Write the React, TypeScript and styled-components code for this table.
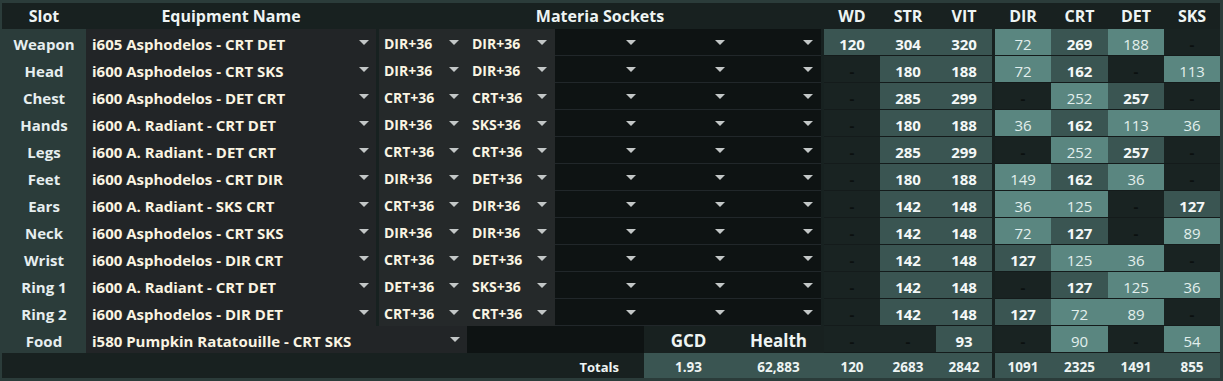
import React from "react";
import styled, { createGlobalStyle, css } from "styled-components";

const COLS =
  "84px 290px 3px 88px 88px 89px 89px 88px 3px 56px 56px 56px 3px 56px 57px 56px 56px";

const GlobalStyle = createGlobalStyle`
  html, body {
    margin: 0;
    background: #2b3c3a;
  }
  body {
    font-family: "Open Sans", "Noto Sans", sans-serif;
    font-size: 14px;
    -webkit-font-smoothing: antialiased;
  }
`;

const Sheet = styled.div`
  padding: 3px 3px 3px 2px;
  width: 1218px;
`;

const Row = styled.div<{ $h: number }>`
  display: grid;
  grid-template-columns: ${COLS};
  height: ${(p) => p.$h}px;
`;

const HeadRow = styled(Row)`
  background: #182120;
`;

const centered = css`
  display: flex;
  align-items: center;
  justify-content: center;
  padding-top: 2px;
`;

const HeadCell = styled.div<{ $col?: string }>`
  grid-column: ${(p) => p.$col ?? "auto"};
  ${centered};
  padding-top: 0;
  color: #eef4f3;
  font-weight: 700;
  font-size: 16px;
`;

const SlotCell = styled.div`
  ${centered};
  color: #e6eeef;
  font-weight: 700;
  font-size: 15px;
`;

type Tone = "equip" | "materia" | "empty";

const toneBg: Record<Tone, string> = {
  equip: "#222527",
  materia: "#25292a",
  empty: "#0e1313",
};

const Select = styled.div<{ $tone: Tone; $col?: string; $line?: boolean }>`
  grid-column: ${(p) => p.$col ?? "auto"};
  display: flex;
  align-items: center;
  padding: 2px ${(p) => (p.$tone === "equip" ? 7 : 8)}px 0
    ${(p) => (p.$tone === "equip" ? 6 : 5)}px;
  background: ${(p) => toneBg[p.$tone]};
  color: #faf4e2;
  font-weight: 700;
  font-size: ${(p) => (p.$tone === "equip" ? 15 : 14)}px;
  white-space: nowrap;
  overflow: hidden;
  ${(p) =>
    p.$line &&
    css`
      box-shadow: inset 0 -1px 0 #21272a;
    `}
`;

const Caret = styled.span`
  width: 0;
  height: 0;
  margin: -2px 0 0 auto;
  border-left: 5px solid transparent;
  border-right: 5px solid transparent;
  border-top: 5px solid #c3c7c7;
  flex: none;
`;

const Divider = styled.div<{ $bg?: string; $col?: string }>`
  grid-column: ${(p) => p.$col ?? "auto"};
  background: ${(p) => p.$bg ?? "#172120"};
`;

type Kind = "dark" | "mid" | "light";

const kindBg: Record<Kind, string> = {
  dark: "#192322",
  mid: "#3a5552",
  light: "#5a8680",
};

const StatCell = styled.div<{ $kind: Kind }>`
  ${centered};
  background: ${(p) => kindBg[p.$kind]};
  box-shadow: inset 0 -1px 0 #141b1b;
  font-weight: ${(p) => (p.$kind === "light" ? 400 : 700)};
  color: ${(p) =>
    p.$kind === "dark" ? "#0b1010" : p.$kind === "light" ? "#e2efed" : "#f4f8f7"};
  font-size: 15px;
`;

const FoodLabel = styled.div<{ $col?: string }>`
  grid-column: ${(p) => p.$col ?? "auto"};
  ${centered};
  background: #182120;
  color: #eef4f3;
  font-weight: 700;
  font-size: 17px;
`;

const TotalsRow = styled(Row)`
  background: #3a5552;
`;

const TotalsLabel = styled.div`
  grid-column: 1 / 7;
  ${centered};
  justify-content: flex-end;
  padding-right: 25px;
  background: #182120;
  color: #eef4f3;
  font-weight: 700;
  font-size: 13px;
`;

const TotalCell = styled.div<{ $col?: string }>`
  grid-column: ${(p) => p.$col ?? "auto"};
  ${centered};
  color: #eef4f3;
  font-weight: 700;
  font-size: 13.5px;
`;

type Stat = [string, Kind];

interface Gear {
  slot: string;
  name: string;
  m1: string;
  m2: string;
  stats: Stat[];
}

const D: Stat = ["-", "dark"];
const m = (v: string): Stat => [v, "mid"];
const l = (v: string): Stat => [v, "light"];

const gear: Gear[] = [
  { slot: "Weapon", name: "i605 Asphodelos - CRT DET", m1: "DIR+36", m2: "DIR+36", stats: [m("120"), m("304"), m("320"), l("72"), m("269"), l("188"), D] },
  { slot: "Head", name: "i600 Asphodelos - CRT SKS", m1: "DIR+36", m2: "DIR+36", stats: [D, m("180"), m("188"), l("72"), m("162"), D, l("113")] },
  { slot: "Chest", name: "i600 Asphodelos - DET CRT", m1: "CRT+36", m2: "CRT+36", stats: [D, m("285"), m("299"), D, l("252"), m("257"), D] },
  { slot: "Hands", name: "i600 A. Radiant - CRT DET", m1: "DIR+36", m2: "SKS+36", stats: [D, m("180"), m("188"), l("36"), m("162"), l("113"), l("36")] },
  { slot: "Legs", name: "i600 A. Radiant - DET CRT", m1: "CRT+36", m2: "CRT+36", stats: [D, m("285"), m("299"), D, l("252"), m("257"), D] },
  { slot: "Feet", name: "i600 Asphodelos - CRT DIR", m1: "DIR+36", m2: "DET+36", stats: [D, m("180"), m("188"), l("149"), m("162"), l("36"), D] },
  { slot: "Ears", name: "i600 A. Radiant - SKS CRT", m1: "CRT+36", m2: "DIR+36", stats: [D, m("142"), m("148"), l("36"), l("125"), D, m("127")] },
  { slot: "Neck", name: "i600 Asphodelos - CRT SKS", m1: "DIR+36", m2: "DIR+36", stats: [D, m("142"), m("148"), l("72"), m("127"), D, l("89")] },
  { slot: "Wrist", name: "i600 Asphodelos - DIR CRT", m1: "CRT+36", m2: "DET+36", stats: [D, m("142"), m("148"), m("127"), l("125"), l("36"), D] },
  { slot: "Ring 1", name: "i600 A. Radiant - CRT DET", m1: "DET+36", m2: "SKS+36", stats: [D, m("142"), m("148"), D, m("127"), l("125"), l("36")] },
  { slot: "Ring 2", name: "i600 Asphodelos - DIR DET", m1: "CRT+36", m2: "CRT+36", stats: [D, m("142"), m("148"), m("127"), l("72"), l("89"), D] },
];

const foodStats: Stat[] = [D, D, m("93"), D, l("90"), D, l("54")];

const totals = ["120", "2683", "2842", "1091", "2325", "1491", "855"];

const statHeads = ["WD", "STR", "VIT", "DIR", "CRT", "DET", "SKS"];

const renderStats = (stats: Stat[]) => (
  <>
    {stats.slice(0, 3).map(([v, k], i) => (
      <StatCell key={`a${i}`} $kind={k}>{v}</StatCell>
    ))}
    <Divider />
    {stats.slice(3).map(([v, k], i) => (
      <StatCell key={`b${i}`} $kind={k}>{v}</StatCell>
    ))}
  </>
);

export default function App() {
  return (
    <>
      <GlobalStyle />
      <Sheet>
        <HeadRow $h={26}>
          <HeadCell>Slot</HeadCell>
          <HeadCell>Equipment Name</HeadCell>
          <HeadCell $col="4 / 9">Materia Sockets</HeadCell>
          <div />
          {statHeads.slice(0, 3).map((h) => (
            <HeadCell key={h}>{h}</HeadCell>
          ))}
          <div />
          {statHeads.slice(3).map((h) => (
            <HeadCell key={h}>{h}</HeadCell>
          ))}
        </HeadRow>

        {gear.map((g) => (
          <Row $h={27} key={g.slot}>
            <SlotCell>{g.slot}</SlotCell>
            <Select $tone="equip">
              {g.name}
              <Caret />
            </Select>
            <Divider />
            <Select $tone="materia">
              {g.m1}
              <Caret />
            </Select>
            <Select $tone="materia">
              {g.m2}
              <Caret />
            </Select>
            <Select $tone="empty" $line>
              <Caret />
            </Select>
            <Select $tone="empty" $line>
              <Caret />
            </Select>
            <Select $tone="empty" $line>
              <Caret />
            </Select>
            <Divider />
            {renderStats(g.stats)}
          </Row>
        ))}

        <Row $h={27}>
          <SlotCell>Food</SlotCell>
          <Select $tone="equip" $col="2 / 5">
            i580 Pumpkin Ratatouille - CRT SKS
            <Caret />
          </Select>
          <Divider $bg="#0e1313" $col="5 / 7" />
          <FoodLabel>GCD</FoodLabel>
          <FoodLabel $col="8 / 10">Health</FoodLabel>
          {renderStats(foodStats)}
        </Row>

        <TotalsRow $h={25}>
          <TotalsLabel>Totals</TotalsLabel>
          <TotalCell>1.93</TotalCell>
          <TotalCell $col="8 / 10">62,883</TotalCell>
          {totals.slice(0, 3).map((t, i) => (
            <TotalCell key={`t${i}`}>{t}</TotalCell>
          ))}
          <Divider />
          {totals.slice(3).map((t, i) => (
            <TotalCell key={`u${i}`}>{t}</TotalCell>
          ))}
        </TotalsRow>
      </Sheet>
    </>
  );
}
